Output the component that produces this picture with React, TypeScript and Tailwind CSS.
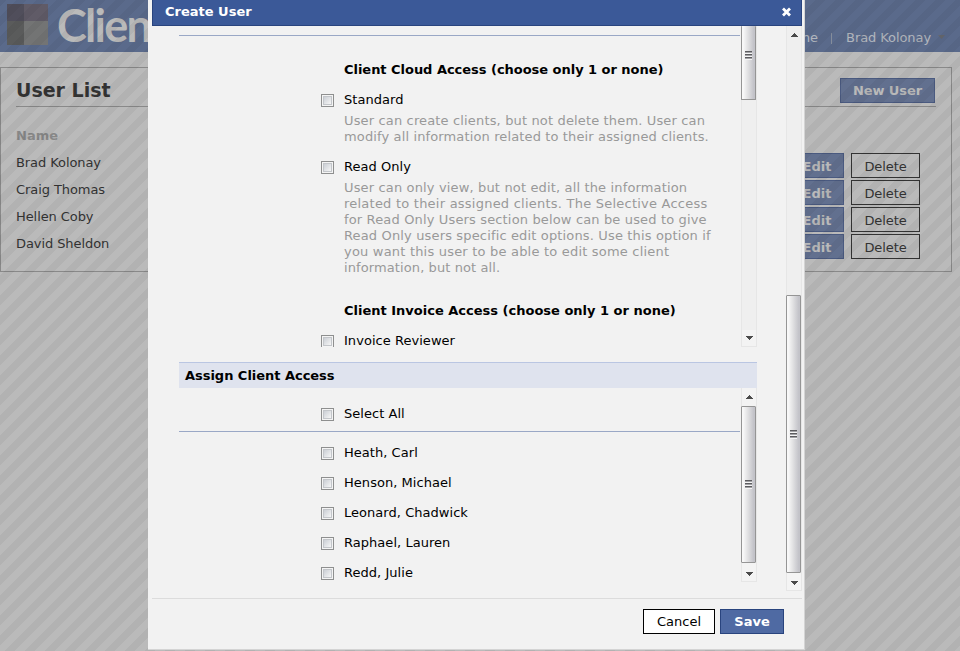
import React from "react";

const users = ["Brad Kolonay", "Craig Thomas", "Hellen Coby", "David Sheldon"];
const clients = ["Heath, Carl", "Henson, Michael", "Leonard, Chadwick", "Raphael, Lauren", "Redd, Julie"];

function Line({ children, className = "" }: { children: React.ReactNode; className?: string }) {
  return <div className={"whitespace-nowrap " + className}>{children}</div>;
}

function Checkbox() {
  return (
    <span className="block h-[13px] w-[13px] shrink-0 border border-[#8e8f8f] bg-[#f4f4f4] p-px">
      <span className="block h-[9px] w-[9px] border border-[#c3c6ca] bg-linear-to-br from-[#cbcfd5] to-[#f6f6f6]" />
    </span>
  );
}

function CheckRow({ label, className = "" }: { label: string; className?: string }) {
  return (
    <div className={"flex h-4 items-start pl-[142px] " + className}>
      <span className="pt-[2px]">
        <Checkbox />
      </span>
      <Line className="pl-[10px] tracking-[0.04px]">{label}</Line>
    </div>
  );
}

function Arrow({ up = false }: { up?: boolean }) {
  return (
    <svg width="7" height="4" viewBox="0 0 7 4" className="block" shapeRendering="crispEdges">
      {up ? (
        <path d="M3 0h1v1h1v1h1v1h1v1H0V3h1V2h1V1h1z" fill="#4a4a4a" />
      ) : (
        <path d="M0 0h7v1H6v1H5v1H4v1H3V3H2V2H1V1H0z" fill="#4a4a4a" />
      )}
    </svg>
  );
}

function Grip() {
  return (
    <svg width="7" height="9" viewBox="0 0 7 9" className="mr-px block" shapeRendering="crispEdges">
      <path d="M0 0h7v1H0zM0 3h7v1H0zM0 6h7v1H0z" fill="#5d5d60" />
      <path d="M0 1h7v1H0zM0 4h7v1H0zM0 7h7v1H0z" fill="#a2a2a6" />
      <path d="M0 2h7v1H0zM0 5h7v1H0zM0 8h7v1H0z" fill="#f5f5f5" />
    </svg>
  );
}

function Thumb({ className }: { className: string }) {
  return (
    <div
      className={
        "flex w-[15px] shrink-0 justify-center rounded-[1px] border border-[#959595] bg-linear-to-r from-[#f8f8f8] from-10% via-[#dedee0] via-50% to-[#c3c3c9] to-90% " +
        className
      }
    >
      <Grip />
    </div>
  );
}

export default function App() {
  return (
    <div className="relative h-[651px] w-[960px] overflow-hidden bg-[#bababa] font-['DejaVu_Sans',Verdana,sans-serif] text-[13px] leading-4 text-[#333]">
      <header className="flex h-[52px] justify-between bg-[#5a6a8b]">
        <div className="flex">
          <div className="mt-1 ml-[7px] grid h-[41px] w-[41px] grid-cols-[17px_24px] grid-rows-[17px_24px]">
            <span className="bg-[#504e5b]" />
            <span className="bg-[#605b67]" />
            <span className="bg-[#5a5b5b]" />
            <span className="bg-[#737474]" />
          </div>
          <div className="mt-[-3px] ml-[9px] font-['Lato',sans-serif] text-[45px] leading-[56px] font-bold tracking-[-1.7px] text-[#bababa]">Client</div>
        </div>
        <nav className="mt-[30px] mr-[15px] flex h-4 text-[#b2b6bd]">
          <span>Home</span>
          <span className="mt-[3px] ml-[13px] h-[11px] w-px bg-[#858d9b]" />
          <span className="ml-[14px] tracking-[-0.08px]">Brad Kolonay</span>
          <svg width="7" height="4" viewBox="0 0 7 4" className="mt-[5px] ml-[7px]">
            <path d="M0 0h7L3.500 4z" fill="#65676e" />
          </svg>
        </nav>
      </header>

      <section className="mt-[15px] h-[205px] w-[952px] border border-[#898989] pr-[15px] pl-[15px]">
        <div className="flex h-[39px] justify-between border-b border-[#898989]">
          <h1 className="pt-[10px] text-[19px] leading-6 font-bold">User List</h1>
          <button className="mt-[10px] mr-px h-[25px] w-[95px] border border-[#4a5a80] bg-[#62708f] pt-px font-bold tracking-[-0.1px] text-[#bababa]">New User</button>
        </div>
        <div className="mt-[21px] h-[16px] font-bold text-[#878787]">Name</div>
        <div className="mt-[9px]">
          {users.map((u) => (
            <div key={u} className="flex h-[27px] items-start justify-between">
              <span className="mt-[2px] tracking-[-0.08px]">{u}</span>
              <span className="flex pr-[16px]">
                <button className="mr-[7px] h-[25px] w-[54px] border border-[#4a5a80] bg-[#62708f] pt-[2px] font-bold text-[#bababa]">Edit</button>
                <button className="h-[25px] w-[69px] border border-[#333] pt-[2px] tracking-[-0.1px]">Delete</button>
              </span>
            </div>
          ))}
        </div>
      </section>

      <div className="absolute inset-0 bg-[repeating-linear-gradient(135deg,rgba(0,0,0,0.043)_0px,rgba(0,0,0,0.043)_4.243px,transparent_4.243px,transparent_11.314px,rgba(0,0,0,0.043)_11.314px,rgba(0,0,0,0.043)_14.142px)]" />

      <div className="absolute top-0 left-[148px] flex h-[650px] w-[657px] flex-col border-r border-b border-[#d4d4d4] bg-[#f2f2f2] pr-[2px] pl-1 text-black">
        <div className="flex h-[26px] shrink-0 items-start justify-between border-x border-b border-[#29447e] bg-[#3b5998] pr-[9px] pl-3 text-white">
          <Line className="pt-[4px] font-bold">Create User</Line>
          <svg width="11" height="10" viewBox="0 0 11 10" className="mt-[7px]">
            <path d="M2 1.500L9 8.500M9 1.500L2 8.500" stroke="white" strokeWidth="2.800" />
          </svg>
        </div>

        <div className="flex h-[572px] shrink-0 justify-between">
          <div className="ml-[27px] w-[578px]">
            <div className="flex h-[321px] overflow-hidden">
              <div className="w-[562px] pt-[9px]">
                <div className="h-px w-[561px] bg-[#9aa8c6]" />
                <Line className="mt-[26px] pl-[165px] font-bold tracking-[-0.03px]">Client Cloud Access (choose only 1 or none)</Line>
                <CheckRow label="Standard" className="mt-[14px]" />
                <div className="mt-[5px] pl-[165px] tracking-[0.15px] text-[#999]">
                  <Line>User can create clients, but not delete them. User can</Line>
                  <Line className="tracking-[0.13px]">modify all information related to their assigned clients.</Line>
                </div>
                <CheckRow label="Read Only" className="mt-[14px]" />
                <div className="mt-[5px] pl-[165px] tracking-[0.15px] text-[#999]">
                  <Line>User can only view, but not edit, all the information</Line>
                  <Line className="tracking-[0.23px]">related to their assigned clients. The Selective Access</Line>
                  <Line>for Read Only Users section below can be used to give</Line>
                  <Line>Read Only users specific edit options. Use this option if</Line>
                  <Line className="tracking-[0.2px]">you want this user to be able to edit some client</Line>
                  <Line className="tracking-[0.1px]">information, but not all.</Line>
                </div>
                <Line className="mt-[27px] pl-[165px] font-bold">Client Invoice Access (choose only 1 or none)</Line>
                <CheckRow label="Invoice Reviewer" className="mt-[14px]" />
              </div>
              <div className="flex w-4 flex-col items-start border-r border-l border-[#e6e6e6] bg-[#efefef]">
                <Thumb className="-ml-px h-[74px] border-t-0 pt-[25px]" />
                <div className="mt-auto flex h-[17px] w-full items-center justify-center border-b border-[#e6e6e6] bg-[#f3f3f3]">
                  <Arrow />
                </div>
              </div>
            </div>

            <Line className="mt-[15px] h-[26px] border-t border-[#bac6e2] bg-[#dfe3ee] pt-[5px] pl-[6px] font-bold tracking-[-0.03px]">Assign Client Access</Line>

            <div className="flex h-[194px]">
              <div className="w-[562px] pt-[18px]">
                <CheckRow label="Select All" />
                <div className="mt-[9px] h-px w-[561px] bg-[#9aa8c6]" />
                <div className="mt-[13px] flex flex-col gap-[14px]">
                  {clients.map((name) => (
                    <CheckRow key={name} label={name} />
                  ))}
                </div>
              </div>
              <div className="flex w-4 flex-col items-start border-r border-b border-l border-[#e6e6e6] bg-[#f3f3f3]">
                <div className="flex h-[18px] w-full items-center justify-center">
                  <Arrow up />
                </div>
                <Thumb className="-ml-px h-[157px] pt-[73px]" />
                <div className="flex h-[18px] w-full items-center justify-center pt-[3px]">
                  <Arrow />
                </div>
              </div>
            </div>
          </div>

          <div className="flex h-[565px] w-4 flex-col items-start border-r border-b border-l border-[#e6e6e6] bg-[#efefef]">
            <div className="flex h-[17px] w-full items-center justify-center">
              <Arrow up />
            </div>
            <div className="h-[252px]" />
            <Thumb className="-ml-px h-[278px] pt-[134px]" />
            <div className="flex h-[17px] w-full items-center justify-center bg-[#f4f4f4] pt-[2px]">
              <Arrow />
            </div>
          </div>
        </div>

        <div className="flex grow justify-end gap-[5px] border-t border-[#dcdcdc] pt-[10px] pr-[18px]">
          <button className="h-[25px] w-[72px] border border-black bg-white">Cancel</button>
          <button className="h-[25px] w-[64px] border border-[#29447e] bg-[#4f6aa3] font-bold text-white">Save</button>
        </div>
      </div>
    </div>
  );
}
